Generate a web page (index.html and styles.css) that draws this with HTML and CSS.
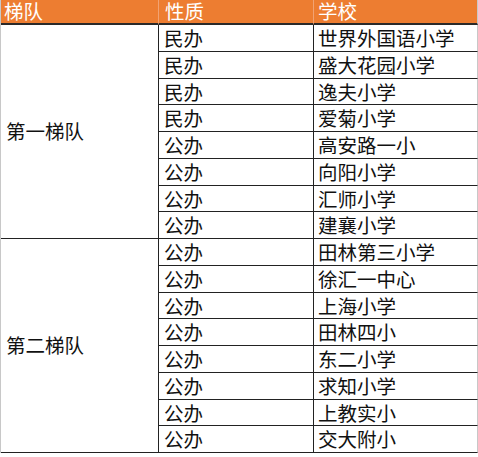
FILE: index.html
```html
<!DOCTYPE html>
<html lang="zh">
<head>
<meta charset="utf-8">
<link rel="stylesheet" href="styles.css">
</head>
<body>
<div class="sheet">
  <div class="hd c1">梯队</div>
  <div class="hd c2">性质</div>
  <div class="hd c3">学校</div>

  <div class="group g1">第一梯队</div>
  <div class="cell c2">民办</div><div class="cell c3">世界外国语小学</div>
  <div class="cell c2">民办</div><div class="cell c3">盛大花园小学</div>
  <div class="cell c2">民办</div><div class="cell c3">逸夫小学</div>
  <div class="cell c2">民办</div><div class="cell c3">爱菊小学</div>
  <div class="cell c2">公办</div><div class="cell c3">高安路一小</div>
  <div class="cell c2">公办</div><div class="cell c3">向阳小学</div>
  <div class="cell c2">公办</div><div class="cell c3">汇师小学</div>
  <div class="cell c2">公办</div><div class="cell c3">建襄小学</div>

  <div class="group g2">第二梯队</div>
  <div class="cell c2">公办</div><div class="cell c3">田林第三小学</div>
  <div class="cell c2">公办</div><div class="cell c3">徐汇一中心</div>
  <div class="cell c2">公办</div><div class="cell c3">上海小学</div>
  <div class="cell c2">公办</div><div class="cell c3">田林四小</div>
  <div class="cell c2">公办</div><div class="cell c3">东二小学</div>
  <div class="cell c2">公办</div><div class="cell c3">求知小学</div>
  <div class="cell c2">公办</div><div class="cell c3">上教实小</div>
  <div class="cell c2">公办</div><div class="cell c3">交大附小</div>
</div>
</body>
</html>
```
FILE: styles.css
```css
html, body {
  margin: 0;
  padding: 0;
  background: #fff;
}
.sheet {
  display: grid;
  grid-template-columns: 157px 155px 165px;
  grid-template-rows: 25px repeat(16, 26.75px);
  width: 477px;
  font-family: "Noto Sans CJK SC", "Noto Sans", sans-serif;
  font-size: 19.5px;
  color: #111;
  border-left: 1px solid #c8c8c8;
  box-sizing: border-box;
}
.hd {
  background: #ed7d31;
  color: #fff;
  border-bottom: 2px solid #2a2a2a;
  display: flex;
  align-items: center;
  line-height: 1.15;
  box-sizing: border-box;
  white-space: nowrap;
}
.hd.c1 { padding-left: 3px; }
.hd.c2 { padding-left: 6px; border-left: 1px solid #f2a272; }
.hd.c3 { padding-left: 4px; border-left: 1px solid #f2a272; border-right: 1px solid #c8c8c8; }
.cell {
  display: flex;
  align-items: center;
  line-height: 1.15;
  border-bottom: 1px solid #222;
  border-left: 1.5px solid #222;
  box-sizing: border-box;
  padding-top: 1px;
  white-space: nowrap;
}
.cell.c2 { padding-left: 5px; }
.cell.c3 { padding-left: 4px; border-right: 1px solid #c8c8c8; }
.group {
  grid-column: 1;
  display: flex;
  align-items: center;
  padding-left: 5px;
  border-bottom: 1.5px solid #222;
  box-sizing: border-box;
  line-height: 1.15;
}
.g1 { grid-row: 2 / span 8; }
.g2 { grid-row: 10 / span 8; }
```
